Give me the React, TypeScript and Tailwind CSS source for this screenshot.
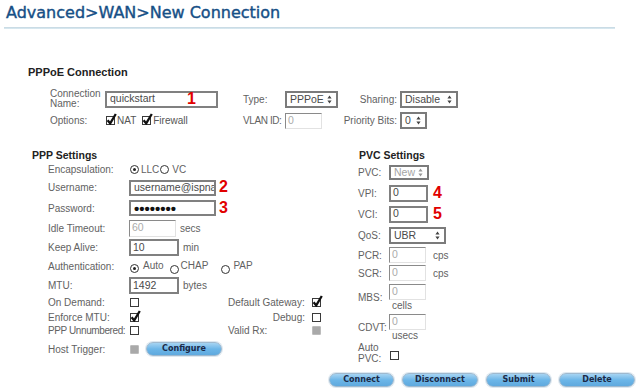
import type { ReactNode } from "react";

function Arrows({ light }: { light?: boolean }) {
  return (
    <svg width="5" height="9" viewBox="0 0 5 9" className="shrink-0">
      <path d="M2.5 0.5 L4.6 3.6 H0.4 Z M2.5 8.5 L4.6 5.4 H0.4 Z" fill={light ? "#9a9a9a" : "#444"} />
    </svg>
  );
}

function Select({ value, className, light }: { value: string; className: string; light?: boolean }) {
  return (
    <div
      className={`${className} border-2 border-[#7b7b7b] bg-white flex items-center justify-between pl-[3px] pr-[4px] ${
        light ? "text-[#a5a5a5]" : "text-[#4a4a4a]"
      }`}
    >
      <span className="text-[10.5px] leading-none">{value}</span>
      <Arrows light={light} />
    </div>
  );
}

function Field({ className, children }: { className: string; children?: ReactNode }) {
  return (
    <div
      className={`${className} border-2 border-[#808080] bg-white flex items-center pl-[2px] overflow-hidden text-[10.5px] text-[#4a4a4a]`}
    >
      {children}
    </div>
  );
}

function LightField({ className, value }: { className: string; value: string }) {
  return (
    <div
      className={`${className} border border-t-[#8a8a8a] border-l-[#8a8a8a] border-r-[#e2e2e2] border-b-[#e2e2e2] bg-white flex items-center pl-[2px] text-[10.5px] text-[#ababab]`}
    >
      {value}
    </div>
  );
}

function Check({ checked, gray }: { checked?: boolean; gray?: boolean }) {
  if (gray) return <span className="block shrink-0 w-[9px] h-[9px] bg-[#a9a9a9] border border-[#bcbcbc] rounded-[1px]" />;
  return (
    <span className="relative block shrink-0 w-[9px] h-[9px] border border-[#3a3a3a] bg-white">
      {checked && (
        <svg className="absolute left-[-1px] top-[-4px]" width="11" height="12" viewBox="0 0 11 12">
          <path d="M1.6 7.2 L4.2 10.4 L9.8 1" stroke="#111" strokeWidth="2.3" fill="none" />
        </svg>
      )}
    </span>
  );
}

function Radio({ checked }: { checked?: boolean }) {
  return (
    <span className="flex shrink-0 items-center justify-center w-[9px] h-[9px] rounded-full border border-[#333] bg-white">
      {checked && <span className="block w-[3px] h-[3px] rounded-full bg-[#222]" />}
    </span>
  );
}

function Num({ n }: { n: string }) {
  return <span className="text-[16px] leading-none font-bold text-[#e10000]">{n}</span>;
}

function Btn({ label, className }: { label: string; className: string }) {
  return (
    <div
      className={`${className} h-[14px] rounded-full border border-[#9fb9cf] bg-gradient-to-b from-[#a6d4f2] via-[#6cb6e8] to-[#5fa9de] shadow-[0_0_0_1px_#dde8f0] flex items-center justify-center font-['DejaVu_Sans',sans-serif] font-bold text-[8px] text-[#1b2a48] leading-none`}
    >
      {label}
    </div>
  );
}

export default function App() {
  return (
    <div className="w-[640px] h-[390px] bg-white overflow-hidden whitespace-nowrap font-['Liberation_Sans',Arial,sans-serif] text-[10px] text-[#626262]">
      <div className="pl-[6px] pt-[3px]">
        <h1 className="font-['DejaVu_Sans',sans-serif] text-[16px] leading-[20px] text-[#164f86] [-webkit-text-stroke:0.4px_#164f86]">
          Advanced&gt;WAN&gt;New Connection
        </h1>
      </div>
      <div className="ml-[4px] mt-[4px] w-[611px] h-[2px] bg-gradient-to-b from-[#c4d6e0] to-[#dcecf3]" />

      {/* PPPoE connection */}
      <div className="mt-[37px] pl-[28px] h-[13px] leading-[13px] font-bold text-[11px] text-[#222]">PPPoE Connection</div>

      <div className="mt-[11px] pl-[50px] h-[18px] flex items-center">
        <div className="w-[55px] leading-[10px]">
          Connection
          <br />
          Name:
        </div>
        <div className="relative">
          <Field className="w-[113px] h-[17px]">
            <span className="pl-[1px]">quickstart</span>
          </Field>
          <span className="absolute left-[82px] top-[0px]">
            <Num n="1" />
          </span>
        </div>
        <div className="ml-[25px] w-[42px]">Type:</div>
        <Select value="PPPoE" className="w-[53px] h-[17px]" />
        <div className="w-[62px] pr-[3px] text-right">Sharing:</div>
        <Select value="Disable" className="w-[58px] h-[17px]" />
      </div>

      <div className="mt-[4px] pl-[50px] h-[17px] flex items-center">
        <div className="w-[55px]">Options:</div>
        <div className="w-[138px] flex items-center">
          <span className="ml-[1px]">
            <Check checked />
          </span>
          <span className="ml-[2px] text-[#555]">NAT</span>
          <span className="ml-[6px]">
            <Check checked />
          </span>
          <span className="ml-[2px] text-[#555]">Firewall</span>
        </div>
        <div className="w-[42px] tracking-[-0.4px]">VLAN ID:</div>
        <LightField className="w-[37px] h-[16px]" value="0" />
        <div className="w-[78px] pr-[3px] text-right">Priority Bits:</div>
        <Select value="0" className="w-[27px] h-[17px]" />
      </div>

      {/* Lower part */}
      <div className="mt-[19px] h-[222px] flex">
        <div className="w-[358px] pl-[32px] flex flex-col">
          <div className="h-[14px] leading-[14px] font-bold text-[10.5px] text-[#222]">PPP Settings</div>
          <div className="pl-[16px] flex flex-col">
            <div className="h-[15px] flex items-center">
              <div className="w-[81px]">Encapsulation:</div>
              <span className="ml-[1px]">
                <Radio checked />
              </span>
              <span className="ml-[2px]">LLC</span>
              <span className="ml-[1px]">
                <Radio />
              </span>
              <span className="ml-[3px]">VC</span>
            </div>
            <div className="h-[21px] flex items-center">
              <div className="w-[81px]">Username:</div>
              <Field className="w-[87px] h-[16px]">
                <span className="pl-[1px]">username@ispna</span>
              </Field>
              <span className="ml-[3px]">
                <Num n="2" />
              </span>
            </div>
            <div className="h-[20px] flex items-center">
              <div className="w-[81px]">Password:</div>
              <Field className="w-[87px] h-[16px]">
                <span className="pl-[1px] text-[15px] leading-none font-bold text-[#111]">••••••••</span>
              </Field>
              <span className="ml-[3px]">
                <Num n="3" />
              </span>
            </div>
            <div className="h-[20px] flex items-center">
              <div className="w-[81px]">Idle Timeout:</div>
              <LightField className="w-[47px] h-[17px]" value="60" />
              <span className="ml-[4px]">secs</span>
            </div>
            <div className="h-[19px] flex items-center">
              <div className="w-[81px]">Keep Alive:</div>
              <Field className="w-[50px] h-[17px]">10</Field>
              <span className="ml-[4px]">min</span>
            </div>
            <div className="h-[19px] flex items-center">
              <div className="w-[81px]">Authentication:</div>
              <span className="ml-[1px] mt-[4px]">
                <Radio checked />
              </span>
              <span className="ml-[4px] mb-[3px]">Auto</span>
              <span className="ml-[6px] mt-[5px]">
                <Radio />
              </span>
              <span className="ml-[2px] mb-[3px]">CHAP</span>
              <span className="ml-[13px] mt-[5px]">
                <Radio />
              </span>
              <span className="ml-[3px] mb-[3px]">PAP</span>
            </div>
            <div className="h-[19px] flex items-center">
              <div className="w-[81px]">MTU:</div>
              <Field className="w-[50px] h-[17px]">1492</Field>
              <span className="ml-[4px]">bytes</span>
            </div>
            <div className="h-[15px] flex items-center">
              <div className="w-[81px]">On Demand:</div>
              <span className="ml-[1px]">
                <Check />
              </span>
              <div className="ml-[89px] w-[84px]">Default Gateway:</div>
              <Check checked />
            </div>
            <div className="h-[14px] flex items-center">
              <div className="w-[81px]">Enforce MTU:</div>
              <span className="ml-[1px]">
                <Check checked />
              </span>
              <div className="ml-[89px] w-[84px] pr-[7px] text-right">Debug:</div>
              <Check />
            </div>
            <div className="h-[13px] flex items-center">
              <div className="w-[81px] tracking-[-0.4px]">PPP Unnumbered:</div>
              <span className="ml-[1px]">
                <Check />
              </span>
              <div className="ml-[89px] w-[84px]">Valid Rx:</div>
              <Check gray />
            </div>
            <div className="h-[24px] flex items-center">
              <div className="w-[81px]">Host Trigger:</div>
              <span className="ml-[1px]">
                <Check gray />
              </span>
              <Btn label="Configure" className="ml-[7px] w-[76px]" />
            </div>
          </div>
        </div>

        <div className="flex flex-col">
          <div className="h-[14px] leading-[14px] pl-[1px] font-bold text-[10.5px] text-[#222]">PVC Settings</div>
          <div className="h-[21px] flex items-center">
            <div className="w-[31px]">PVC:</div>
            <Select value="New" light className="w-[40px] h-[15px]" />
          </div>
          <div className="h-[20px] flex items-center">
            <div className="w-[31px]">VPI:</div>
            <Field className="w-[39px] h-[17px]">0</Field>
            <span className="ml-[5px]">
              <Num n="4" />
            </span>
          </div>
          <div className="h-[22px] flex items-center">
            <div className="w-[31px]">VCI:</div>
            <Field className="w-[39px] h-[17px]">0</Field>
            <span className="ml-[5px]">
              <Num n="5" />
            </span>
          </div>
          <div className="h-[21px] flex items-center">
            <div className="w-[31px]">QoS:</div>
            <Select value="UBR" className="w-[57px] h-[17px]" />
          </div>
          <div className="h-[18px] flex items-center">
            <div className="w-[31px]">PCR:</div>
            <LightField className="w-[37px] h-[16px]" value="0" />
            <span className="ml-[7px]">cps</span>
          </div>
          <div className="h-[18px] flex items-center">
            <div className="w-[31px]">SCR:</div>
            <LightField className="w-[37px] h-[16px]" value="0" />
            <span className="ml-[7px]">cps</span>
          </div>
          <div className="h-[30px] flex items-center">
            <div className="w-[31px]">MBS:</div>
            <div className="flex flex-col">
              <LightField className="w-[37px] h-[16px]" value="0" />
              <span className="pl-[3px] leading-[11px]">cells</span>
            </div>
          </div>
          <div className="h-[30px] flex items-center">
            <div className="w-[31px]">CDVT:</div>
            <div className="flex flex-col">
              <LightField className="w-[37px] h-[16px]" value="0" />
              <span className="pl-[3px] leading-[11px]">usecs</span>
            </div>
          </div>
          <div className="h-[22px] flex items-center">
            <div className="w-[31px] leading-[11px]">
              Auto
              <br />
              PVC:
            </div>
            <span className="ml-[1px] mt-[4px]">
              <Check />
            </span>
          </div>
        </div>
      </div>

      <div className="mt-[3px] pr-[5px] flex justify-end gap-[8px]">
        <Btn label="Connect" className="w-[65px]" />
        <Btn label="Disconnect" className="w-[76px]" />
        <Btn label="Submit" className="w-[65px]" />
        <Btn label="Delete" className="w-[76px]" />
      </div>
    </div>
  );
}
